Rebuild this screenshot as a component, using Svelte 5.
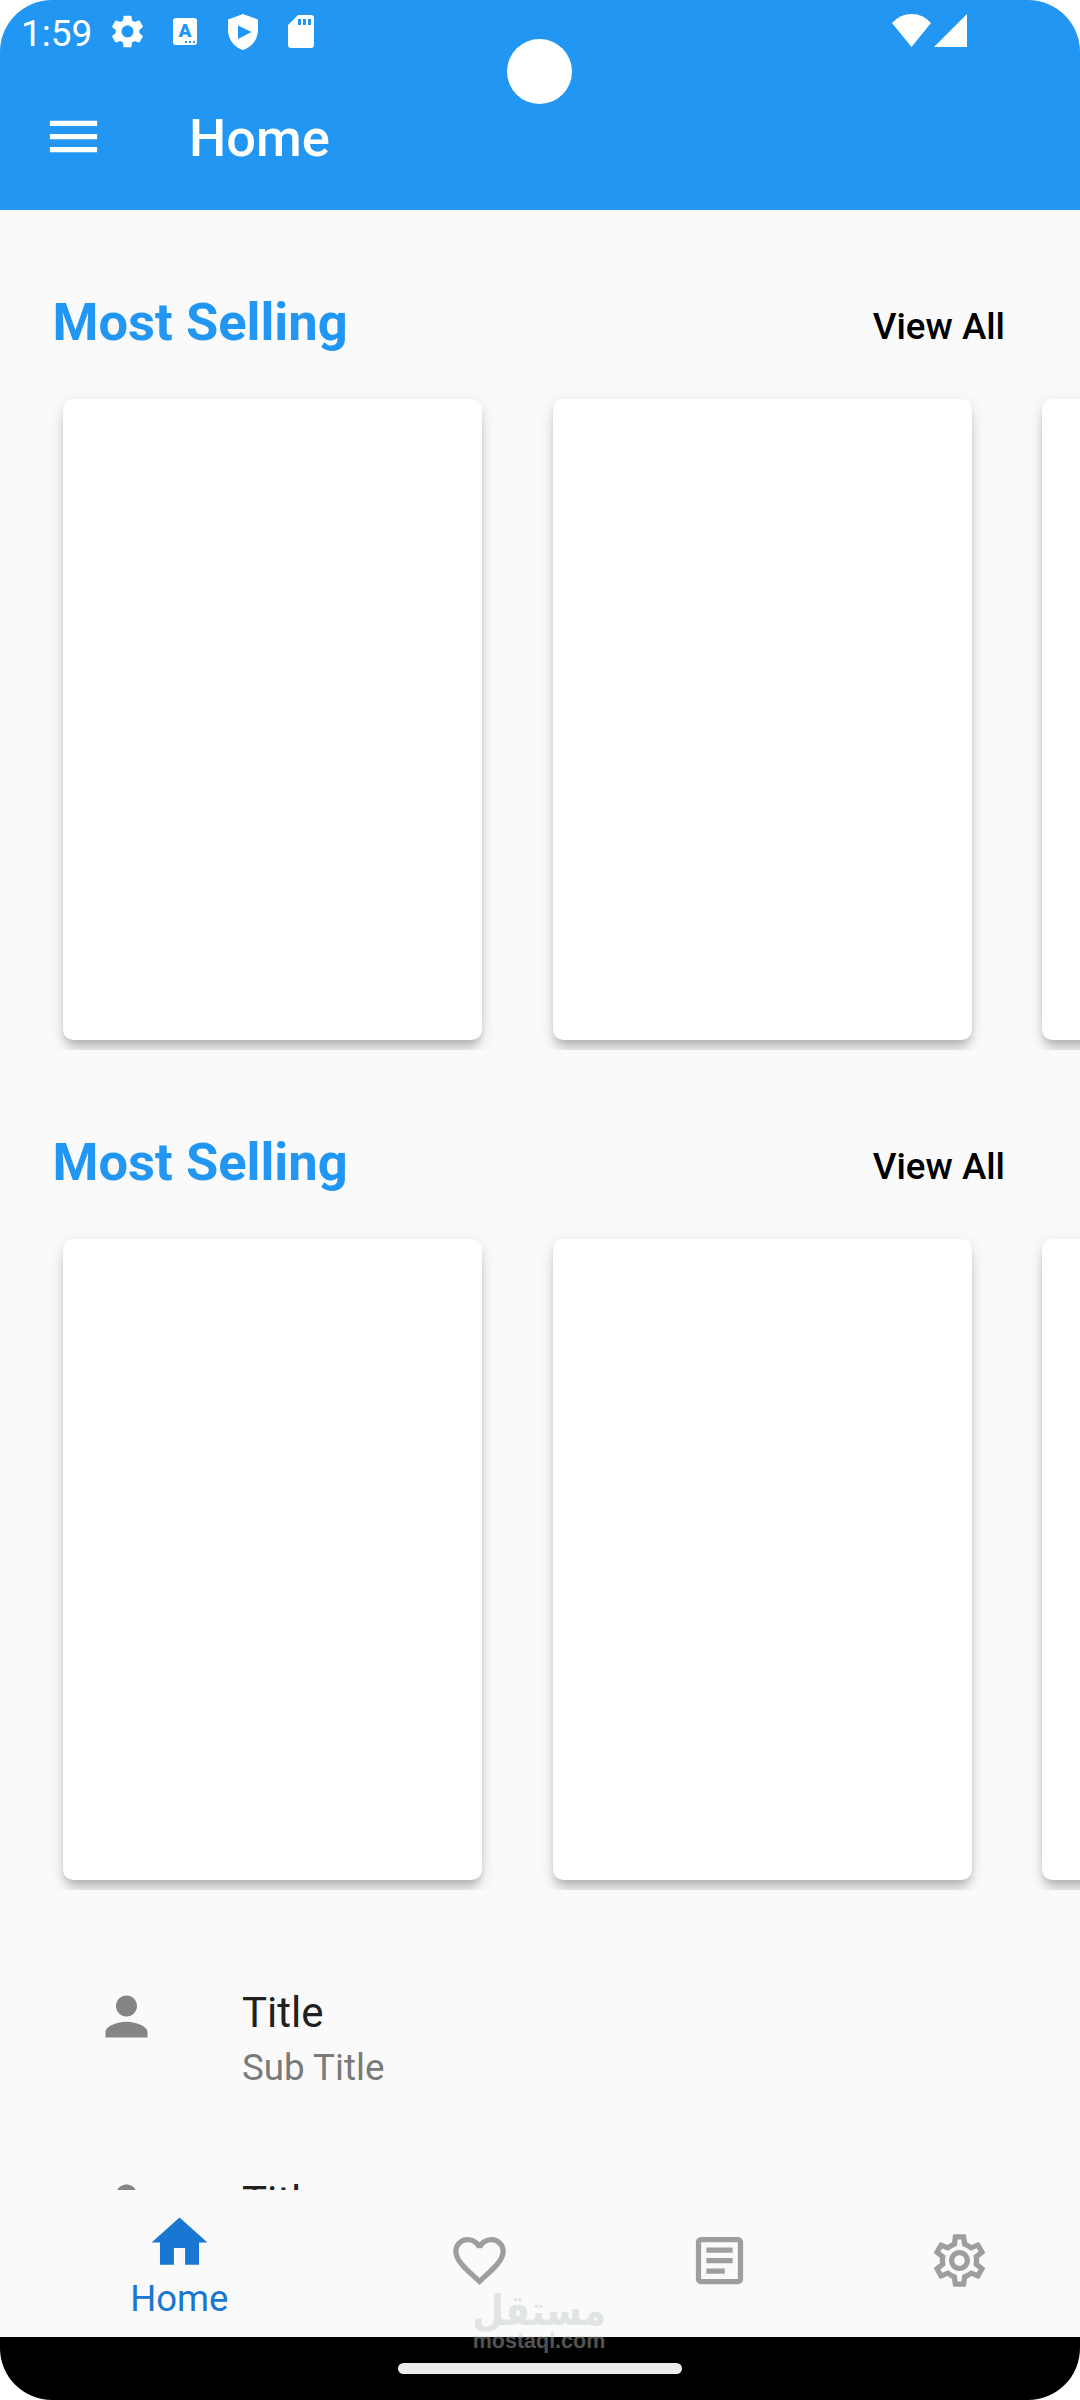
<script>
  let sections = $state([
    { title: 'Most Selling', action: 'View All', items: [1, 2, 3] },
    { title: 'Most Selling', action: 'View All', items: [1, 2, 3] },
  ]);

  let people = $state([
    { title: 'Title', subtitle: 'Sub Title' },
    { title: 'Title', subtitle: 'Sub Title' },
  ]);

  const tabs = [
    { label: 'Home', icon: 'M10 20v-6h4v6h5v-8h3L12 3 2 12h3v8z' },
    {
      label: 'Favorites',
      icon: 'M16.5 3c-1.74 0-3.41.81-4.5 2.09C10.91 3.81 9.24 3 7.5 3 4.42 3 2 5.42 2 8.5c0 3.78 3.4 6.86 8.55 11.54L12 21.35l1.45-1.32C18.6 15.36 22 12.28 22 8.5 22 5.42 19.58 3 16.5 3zm-4.4 15.55l-.1.1-.1-.1C7.14 14.24 4 11.39 4 8.5 4 6.5 5.5 5 7.5 5c1.54 0 3.04.99 3.57 2.36h1.87C13.46 5.99 14.96 5 16.5 5c2 0 3.5 1.5 3.5 3.5 0 2.89-3.14 5.74-7.9 10.05z',
    },
    {
      label: 'Articles',
      icon: 'M19 5v14H5V5h14m0-2H5c-1.1 0-2 .9-2 2v14c0 1.1.9 2 2 2h14c1.1 0 2-.9 2-2V5c0-1.1-.9-2-2-2zM14 17H7v-2h7v2zm3-4H7v-2h10v2zm0-4H7V7h10v2z',
    },
    {
      label: 'Settings',
      icon: 'M19.43 12.98c.04-.32.07-.64.07-.98 0-.34-.03-.66-.07-.98l2.11-1.65c.19-.15.24-.42.12-.64l-2-3.46c-.09-.16-.26-.25-.44-.25-.06 0-.12.01-.17.03l-2.49 1c-.52-.4-1.08-.73-1.69-.98l-.38-2.65C14.46 2.18 14.25 2 14 2h-4c-.25 0-.46.18-.49.42l-.38 2.65c-.61.25-1.17.59-1.69.98l-2.49-1c-.06-.02-.12-.03-.18-.03-.17 0-.34.09-.43.25l-2 3.46c-.13.22-.07.49.12.64l2.11 1.65c-.04.32-.07.65-.07.98 0 .33.03.66.07.98l-2.11 1.65c-.19.15-.24.42-.12.64l2 3.46c.09.16.26.25.44.25.06 0 .12-.01.17-.03l2.49-1c.52.4 1.08.73 1.69.98l.38 2.65c.03.24.24.42.49.42h4c.25 0 .46-.18.49-.42l.38-2.65c.61-.25 1.17-.59 1.69-.98l2.49 1c.06.02.12.03.18.03.17 0 .34-.09.43-.25l2-3.46c.12-.22.07-.49-.12-.64l-2.11-1.65zm-1.98-1.71c.04.31.05.52.05.73 0 .21-.02.43-.05.73l-.14 1.13.89.7 1.08.84-.7 1.21-1.27-.51-1.04-.42-.9.68c-.43.32-.84.56-1.25.73l-1.06.43-.16 1.13-.2 1.35h-1.4l-.19-1.35-.16-1.13-1.06-.43c-.43-.18-.83-.41-1.23-.71l-.91-.7-1.06.43-1.27.51-.7-1.21 1.08-.84.89-.7-.14-1.13c-.03-.31-.05-.54-.05-.74s.02-.43.05-.73l.14-1.13-.89-.7-1.08-.84.7-1.21 1.27.51 1.04.42.9-.68c.43-.32.84-.56 1.25-.73l1.06-.43.16-1.13.2-1.35h1.39l.19 1.35.16 1.13 1.06.43c.43.18.83.41 1.23.71l.91.7 1.06-.43 1.27-.51.7 1.21-1.07.85-.89.7.14 1.13zM12 8c-2.21 0-4 1.79-4 4s1.79 4 4 4 4-1.79 4-4-1.79-4-4-4zm0 6c-1.1 0-2-.9-2-2s.9-2 2-2 2 .9 2 2-.9 2-2 2z',
    },
  ];

  let active = $state(0);
</script>

<div class="phone">
  <header>
    <div class="status">
      <span class="time">1:59</span>
      <svg class="gear" viewBox="2 2 20 20">
        <path d="M19.14 12.94c.04-.3.06-.61.06-.94 0-.32-.02-.64-.07-.94l2.03-1.58c.18-.14.23-.41.12-.61l-1.92-3.32c-.12-.22-.37-.29-.59-.22l-2.39.96c-.5-.38-1.03-.7-1.62-.94l-.36-2.54c-.04-.24-.24-.41-.48-.41h-3.84c-.24 0-.43.17-.47.41l-.36 2.54c-.59.24-1.13.57-1.62.94l-2.39-.96c-.22-.08-.47 0-.59.22L2.74 8.87c-.12.21-.08.47.12.61l2.03 1.58c-.05.3-.09.63-.09.94s.02.64.07.94l-2.03 1.58c-.18.14-.23.41-.12.61l1.92 3.32c.12.22.37.29.59.22l2.39-.96c.5.38 1.03.7 1.62.94l.36 2.54c.05.24.24.41.48.41h3.84c.24 0 .44-.17.47-.41l.36-2.54c.59-.24 1.13-.56 1.62-.94l2.39.96c.22.08.47 0 .59-.22l1.92-3.32c.12-.22.07-.47-.12-.61l-2.01-1.58zM12 15.6c-1.98 0-3.6-1.62-3.6-3.6s1.62-3.6 3.6-3.6 3.6 1.62 3.6 3.6-1.62 3.6-3.6 3.6z" />
      </svg>
      <span class="lang">A
        <svg viewBox="0 0 10 2"><path d="M0 0h2v2H0zM4 0h2v2H4zM8 0h2v2H8z" /></svg>
      </span>
      <svg class="shield" viewBox="0 0 30 36">
        <path fill-rule="evenodd" d="M15 0L30 5.500V16C30 25.500 23.500 33.500 15 36 6.500 33.500 0 25.500 0 16V5.500zM10 11.500v13.500L23.500 18z" />
      </svg>
      <svg class="sd" viewBox="0 0 26 33">
        <path fill-rule="evenodd" d="M10 0h13a3 3 0 0 1 3 3v27a3 3 0 0 1-3 3H3a3 3 0 0 1-3-3V10zM10 4v6h3V4zM15 4v6h3V4zM20 4v6h3V4z" />
      </svg>
      <svg class="wifi" viewBox="0 0 39 33">
        <path d="M0 9Q8 0 19.500 0T39 9L19.500 33z" />
      </svg>
      <svg class="signal" viewBox="0 0 33 33"><path d="M33 0v33H0z" /></svg>
    </div>
    <div class="appbar">
      <svg class="menu" viewBox="0 0 24 24">
        <path d="M3 18h18v-2H3v2zm0-5h18v-2H3v2zm0-7v2h18V6H3z" />
      </svg>
      <h1>Home</h1>
    </div>
    <div class="camera"></div>
  </header>

  <main>
    {#each sections as section}
      <section>
        <div class="heading">
          <h2>{section.title}</h2>
          <button>{section.action}</button>
        </div>
        <div class="cards">
          {#each section.items as item (item)}
            <div class="card"></div>
          {/each}
        </div>
      </section>
    {/each}

    <div class="list">
      {#each people as person}
        <div class="tile">
          <svg viewBox="0 0 24 24">
            <path d="M12 12c2.210 0 4-1.790 4-4s-1.790-4-4-4-4 1.790-4 4 1.790 4 4 4zm0 2c-2.670 0-8 1.340-8 4v2h16v-2c0-2.660-5.330-4-8-4z" />
          </svg>
          <div>
            <p class="title">{person.title}</p>
            <p class="subtitle">{person.subtitle}</p>
          </div>
        </div>
      {/each}
    </div>
  </main>

  <nav>
    {#each tabs as tab, i}
      <button class:active={active === i} aria-label={tab.label} onclick={() => (active = i)}>
        <svg viewBox="0 0 24 24"><path d={tab.icon} /></svg>
        {#if active === i}<span>{tab.label}</span>{/if}
      </button>
    {/each}
  </nav>

  <footer><div class="handle"></div></footer>

  <div class="watermark">
    <span class="brand" lang="ar">مستقل</span>
    <span class="site">mostaql.com</span>
  </div>
</div>

<style>
  :global(body) {
    background: #fff;
  }

  .phone {
    position: relative;
    display: flex;
    flex-direction: column;
    width: 1080px;
    height: 2400px;
    overflow: hidden;
    border-radius: 52px;
    background: #fafafa;
    font-family: Roboto, sans-serif;
  }

  h1, h2, p {
    margin: 0;
  }

  button {
    padding: 0;
    border: none;
    background: none;
    font-family: inherit;
    cursor: pointer;
  }

  svg {
    display: block;
    flex: none;
    fill: currentColor;
  }

  header {
    position: relative;
    flex: none;
    height: 210px;
    background: #2196f3;
    color: #fff;
  }

  .status {
    display: flex;
    align-items: center;
    height: 63px;
    padding: 0 113px 0 21px;
  }

  .time {
    width: 90px;
    font-size: 37px;
    line-height: 43px;
    margin-top: 3px;
  }

  .gear {
    width: 33px;
    height: 33px;
  }

  .lang {
    position: relative;
    width: 24px;
    height: 27px;
    margin-left: 29px;
    border-radius: 3px;
    background: #fff;
    color: #2196f3;
    font-size: 19px;
    font-weight: 900;
    line-height: 26px;
    text-align: center;
  }

  .lang svg {
    position: absolute;
    right: 2px;
    bottom: 2px;
    width: 10px;
    height: 2px;
  }

  .shield {
    width: 30px;
    height: 36px;
    margin-left: 31px;
  }

  .sd {
    width: 26px;
    height: 33px;
    margin-left: 30px;
  }

  .wifi {
    width: 39px;
    height: 33px;
    margin: 0 3px 2px auto;
  }

  .signal {
    width: 33px;
    height: 33px;
    margin-bottom: 2px;
  }

  .appbar {
    display: flex;
    align-items: center;
    height: 147px;
    padding-left: 42px;
  }

  .menu {
    width: 63px;
    height: 63px;
  }

  h1 {
    margin: 2px 0 0 84px;
    font-size: 52.5px;
    font-weight: 500;
    line-height: 62px;
  }

  .camera {
    position: absolute;
    top: 39px;
    left: 507px;
    width: 65px;
    height: 65px;
    border-radius: 50%;
    background: #fff;
  }

  main {
    flex: 1;
    min-height: 0;
    overflow: hidden;
  }

  section {
    height: 840px;
  }

  .heading {
    display: flex;
    align-items: flex-start;
    justify-content: space-between;
    height: 98px;
    padding: 81px 75px 0 52.5px;
  }

  h2 {
    color: #2196f3;
    font-size: 52.5px;
    font-weight: 700;
    line-height: 62px;
  }

  .heading button {
    margin-top: 14px;
    color: #000;
    font-size: 36.75px;
    font-weight: 500;
    line-height: 43px;
  }

  .cards {
    display: flex;
    gap: 70.5px;
    height: 651px;
    padding: 10px 0 0 63px;
    overflow: hidden;
  }

  .card {
    flex: none;
    width: 419px;
    height: 641px;
    border-radius: 10.5px;
    background: #fff;
    box-shadow: 0 12px 13px -3px rgba(0, 0, 0, 0.18), 0 3px 16px rgba(0, 0, 0, 0.1), 0 4px 4px rgba(0, 0, 0, 0.06);
  }

  .list {
    padding-top: 84px;
  }

  .tile {
    display: flex;
    height: 189px;
    padding-left: 95px;
  }

  .tile svg {
    width: 63px;
    height: 63px;
    margin-top: 11px;
    color: #858585;
  }

  .tile div {
    margin-left: 84px;
  }

  .title {
    color: #212121;
    font-size: 42px;
    line-height: 49px;
    padding-top: 14px;
  }

  .subtitle {
    color: #7a7a7a;
    font-size: 36.75px;
    line-height: 43px;
    margin-top: 9px;
  }

  nav {
    display: flex;
    flex: none;
    height: 147px;
  }

  nav button {
    display: flex;
    flex: 2;
    flex-direction: column;
    align-items: center;
    justify-content: center;
    padding: 0 1px 6px 0;
    color: #9e9e9e;
  }

  nav button.active {
    flex: 3;
    justify-content: flex-start;
    padding: 19px 1px 0 0;
    color: #1976d2;
  }

  nav svg {
    width: 63px;
    height: 63px;
  }

  nav .active svg {
    width: 67px;
    height: 67px;
  }

  nav span {
    font-size: 36.5px;
    line-height: 43px;
    margin-top: 1px;
  }

  footer {
    display: flex;
    flex: none;
    justify-content: center;
    height: 63px;
    background: #000;
  }

  .handle {
    width: 284px;
    height: 11px;
    margin-top: 26px;
    border-radius: 6px;
    background: #ececec;
  }

  .watermark {
    position: absolute;
    top: 2289px;
    left: 474px;
    display: flex;
    flex-direction: column;
    align-items: center;
    width: 130px;
    color: #c0c6c6;
    opacity: 0.42;
    white-space: nowrap;
  }

  .brand {
    height: 40px;
    font: bold 36.5px/44px "DejaVu Sans", sans-serif;
    transform: scaleY(1.15);
  }

  .site {
    font: bold 21.5px/25px "Liberation Sans", sans-serif;
  }
</style>
